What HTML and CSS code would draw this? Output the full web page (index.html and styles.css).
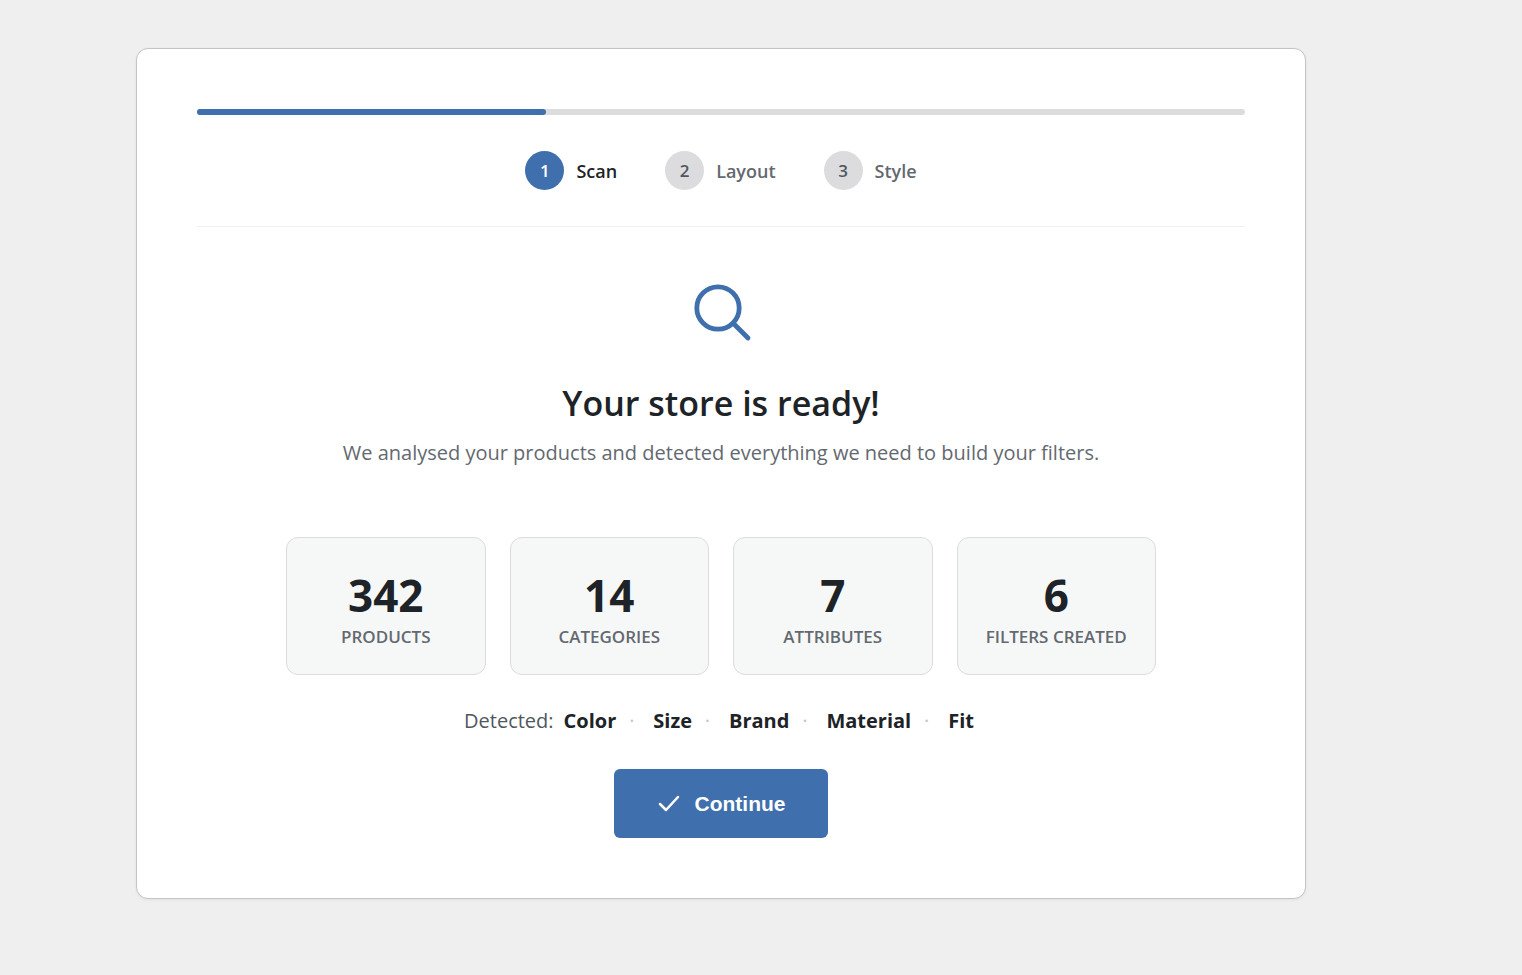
FILE: index.html
```html
<!DOCTYPE html>
<html lang="en">
<head>
  <meta charset="UTF-8" />
  <meta name="viewport" content="width=device-width, initial-scale=1.0" />
  <title>Store filters setup</title>
  <link rel="stylesheet" href="styles.css">
</head>
<body>
  <main class="wizard">
    <div class="progress">
      <div class="progress-fill"></div>
    </div>

    <ol class="steps">
      <li class="step active"><span class="step-number">1</span>Scan</li>
      <li class="step"><span class="step-number">2</span>Layout</li>
      <li class="step"><span class="step-number">3</span>Style</li>
    </ol>

    <section class="scan">
      <svg class="scan-icon" viewBox="0 0 72 72" aria-hidden="true">
        <circle cx="33" cy="33" r="21.2" />
        <path d="M48.5 48.5 63 63" />
      </svg>
      <h1>Your store is ready!</h1>
      <p class="subtitle">We analysed your products and detected everything we need to build your filters.</p>

      <div class="stats">
        <div class="stat">
          <div class="stat-value">342</div>
          <div class="stat-label">Products</div>
        </div>
        <div class="stat">
          <div class="stat-value">14</div>
          <div class="stat-label">Categories</div>
        </div>
        <div class="stat">
          <div class="stat-value">7</div>
          <div class="stat-label">Attributes</div>
        </div>
        <div class="stat">
          <div class="stat-value">6</div>
          <div class="stat-label">Filters created</div>
        </div>
      </div>

      <p class="detected">
        <span class="detected-label">Detected:</span>
        <strong>Color</strong><span class="dot">·</span>
        <strong>Size</strong><span class="dot">·</span>
        <strong>Brand</strong><span class="dot">·</span>
        <strong>Material</strong><span class="dot">·</span>
        <strong>Fit</strong>
      </p>

      <button type="button" class="continue">
        <svg class="check-icon" viewBox="0 0 24 24" aria-hidden="true">
          <path d="M3 12 9 18 21 5" />
        </svg>
        Continue
      </button>
    </section>
  </main>
</body>
</html>
```
FILE: styles.css
```css
* {
  box-sizing: border-box;
}
body {
  margin: 0;
  padding: 48px 216px 76px 136px;
  background: #efefef;
  color: #1d2327;
  font-family: "Open Sans", "Noto Sans", sans-serif;
}
.wizard {
  padding: 60px;
  background: #fff;
  border: 1px solid #c3c4c7;
  border-radius: 12px;
  box-shadow: 0 1px 3px rgba(0,0,0,0.06);
}
.progress {
  height: 6px;
  background: #dcdcde;
  border-radius: 3px;
}
.progress-fill {
  width: 33.3%;
  height: 100%;
  background: #3f70ad;
  border-radius: 3px;
}
.steps {
  display: flex;
  justify-content: center;
  gap: 48px;
  margin: 0;
  padding: 36px 0;
  border-bottom: 1px solid #f0f0f1;
  list-style: none;
}
.step {
  display: flex;
  align-items: center;
  gap: 12px;
  color: #646970;
  font-size: 18px;
  font-weight: 600;
}
.step-number {
  display: flex;
  align-items: center;
  justify-content: center;
  width: 39px;
  height: 39px;
  border-radius: 50%;
  background: #dcdcde;
  color: #50575e;
  font-size: 17px;
}
.step.active {
  color: #1d2327;
}
.step.active .step-number {
  background: #3f70ad;
  color: #fff;
}
.scan {
  display: flex;
  flex-direction: column;
  align-items: center;
  padding-top: 48px;
  text-align: center;
}
.scan-icon {
  width: 72px;
  height: 72px;
  fill: none;
  stroke: #3f70ad;
  stroke-width: 4.8;
  stroke-linecap: round;
}
h1 {
  margin: 32px 0 10px;
  font-size: 34px;
  font-weight: 600;
  line-height: 48px;
}
.subtitle {
  margin: 0 0 68px;
  color: #646970;
  font-size: 20px;
  line-height: 32px;
}
.stats {
  display: grid;
  grid-template-columns: repeat(4, 1fr);
  gap: 24px;
  width: 100%;
  max-width: 870px;
}
.stat {
  padding: 30px 16px 22px;
  background: #f6f8f8;
  border: 1px solid #dcdcde;
  border-radius: 12px;
}
.stat-value {
  font-size: 44px;
  font-weight: 700;
  line-height: 54px;
}
.stat-label {
  color: #646970;
  font-size: 17px;
  font-weight: 600;
  line-height: 30px;
  text-transform: uppercase;
}
.detected {
  display: flex;
  margin: 30px 0 32px;
  padding-right: 4px;
  font-size: 20px;
  line-height: 32px;
}
.detected-label {
  margin-right: 10px;
  color: #50575e;
}
.dot {
  width: 37px;
  padding-right: 6px;
  color: #c3c4c7;
}
.continue {
  display: flex;
  align-items: center;
  gap: 14px;
  height: 69px;
  padding: 0 43px;
  background: #3f70ad;
  border: 0;
  border-radius: 6px;
  color: #fff;
  font-family: "Liberation Sans", Arial, sans-serif;
  font-size: 21px;
  font-weight: 700;
  cursor: pointer;
}
.continue:hover {
  background: #355f94;
}
.check-icon {
  width: 24px;
  height: 24px;
  fill: none;
  stroke: #fff;
  stroke-width: 2.5;
  stroke-linecap: round;
  stroke-linejoin: round;
}
```
